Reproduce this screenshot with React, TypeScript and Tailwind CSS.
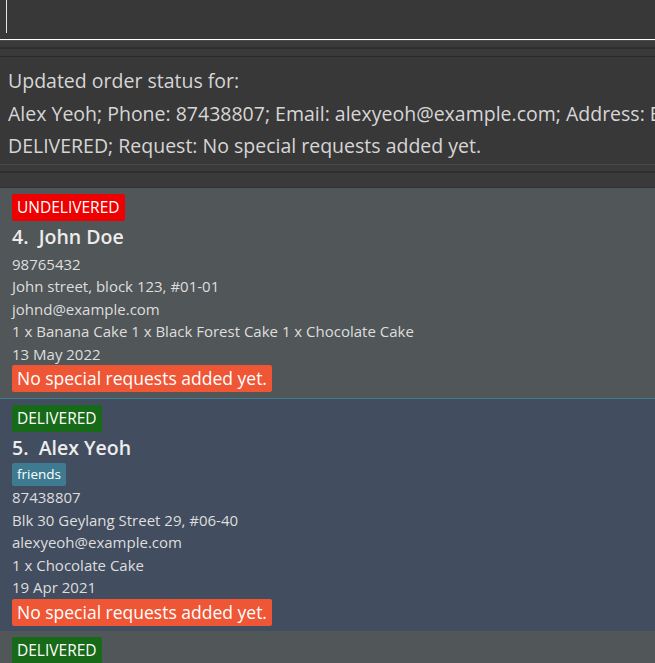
import React from 'react';

type Order = {
  index: number;
  name: string;
  delivered: boolean;
  tags: string[];
  phone: string;
  address: string;
  email: string;
  items: string;
  date: string;
  request: string;
  selected?: boolean;
};

const ORDERS: Order[] = [
  {
    index: 4,
    name: 'John Doe',
    delivered: false,
    tags: [],
    phone: '98765432',
    address: 'John street, block 123, #01-01',
    email: 'johnd@example.com',
    items: '1 x Banana Cake 1 x Black Forest Cake 1 x Chocolate Cake',
    date: '13 May 2022',
    request: 'No special requests added yet.',
  },
  {
    index: 5,
    name: 'Alex Yeoh',
    delivered: true,
    tags: ['friends'],
    phone: '87438807',
    address: 'Blk 30 Geylang Street 29, #06-40',
    email: 'alexyeoh@example.com',
    items: '1 x Chocolate Cake',
    date: '19 Apr 2021',
    request: 'No special requests added yet.',
    selected: true,
  },
  {
    index: 6,
    name: 'Bernice Yu',
    delivered: true,
    tags: [],
    phone: '99272758',
    address: 'Blk 30 Lorong 3 Serangoon Gardens, #07-18',
    email: 'berniceyu@example.com',
    items: '1 x Chocolate Cake',
    date: '19 Apr 2021',
    request: 'No special requests added yet.',
  },
];

const font = "font-['Open_Sans','Noto_Sans',sans-serif]";

function OrderCard({ order }: { order: Order }) {
  const bg = order.selected ? 'bg-[#424d5f] border-t border-[#3e7b91]' : 'bg-[#515658]';
  return (
    <div className={`${bg} px-3 pt-[6px] pb-[5.5px] flex flex-col items-start`}>
      <span
        className={`${order.delivered ? 'bg-[#176a17]' : 'bg-[#ee0000]'} text-white text-[15.5px] leading-[27px] px-[5px] rounded-[2px]`}
      >
        {order.delivered ? 'DELIVERED' : 'UNDELIVERED'}
      </span>
      <div className="text-[#ececec] font-semibold text-[19.5px] leading-[31.5px] whitespace-pre">
        {order.index}.  {order.name}
      </div>
      {order.tags.length > 0 && (
        <div className="flex gap-1">
          {order.tags.map((t) => (
            <span key={t} className="bg-[#3e7b91] text-white text-[13.5px] leading-[23px] px-[5px] rounded-[2px]">
              {t}
            </span>
          ))}
        </div>
      )}
      <div className="text-[#dedede] text-[15px] leading-[22.5px] whitespace-nowrap">
        <div>{order.phone}</div>
        <div>{order.address}</div>
        <div>{order.email}</div>
        <div>{order.items}</div>
        <div>{order.date}</div>
      </div>
      <span className="bg-[#ef5636] text-white text-[17.5px] leading-[27px] px-[5px] rounded-[2px] whitespace-nowrap">
        {order.request}
      </span>
    </div>
  );
}

export default function App() {
  return (
    <div className={`${font} w-[655px] h-[663px] overflow-hidden bg-[#383838] flex flex-col`}>
      {/* command box */}
      <div className="h-[39px] shrink-0 bg-[#383838] relative">
        <div className="absolute left-[6px] top-0 w-[1px] h-[33px] bg-[#e6e6e6]" />
      </div>
      <div className="h-[1px] shrink-0 bg-white" />
      <div className="h-[1px] shrink-0 bg-[#4a4a4a]" />

      {/* divider */}
      <div className="h-[6px] shrink-0 bg-[#3a3a3a]" />
      <div className="h-[2px] shrink-0 bg-[#2e2e2e]" />
      <div className="h-[7px] shrink-0 bg-[#3a3a3a]" />
      <div className="h-[1px] shrink-0 bg-[#2b2b2b]" />

      {/* result display */}
      <div className="h-[107px] shrink-0 bg-[#383838] pl-2 pt-[8px] text-[19.5px] leading-[32.5px] text-[#d6d6d6] whitespace-nowrap overflow-hidden">
        <div>Updated order status for:</div>
        <div>Alex Yeoh; Phone: 87438807; Email: alexyeoh@example.com; Address: Blk 30 Geylang Street 29, #06-40;</div>
        <div>DELIVERED; Request: No special requests added yet.</div>
      </div>
      <div className="h-[1px] shrink-0 bg-[#4a4a4a]" />
      <div className="h-[6px] shrink-0 bg-[#3a3a3a]" />
      <div className="h-[2px] shrink-0 bg-[#2e2e2e]" />
      <div className="h-[14px] shrink-0 bg-[#3a3a3a]" />
      <div className="h-[1px] shrink-0 bg-[#333333]" />

      {/* order list */}
      <div className="flex-1 overflow-hidden flex flex-col">
        {ORDERS.map((o) => (
          <OrderCard key={o.index} order={o} />
        ))}
      </div>
    </div>
  );
}
